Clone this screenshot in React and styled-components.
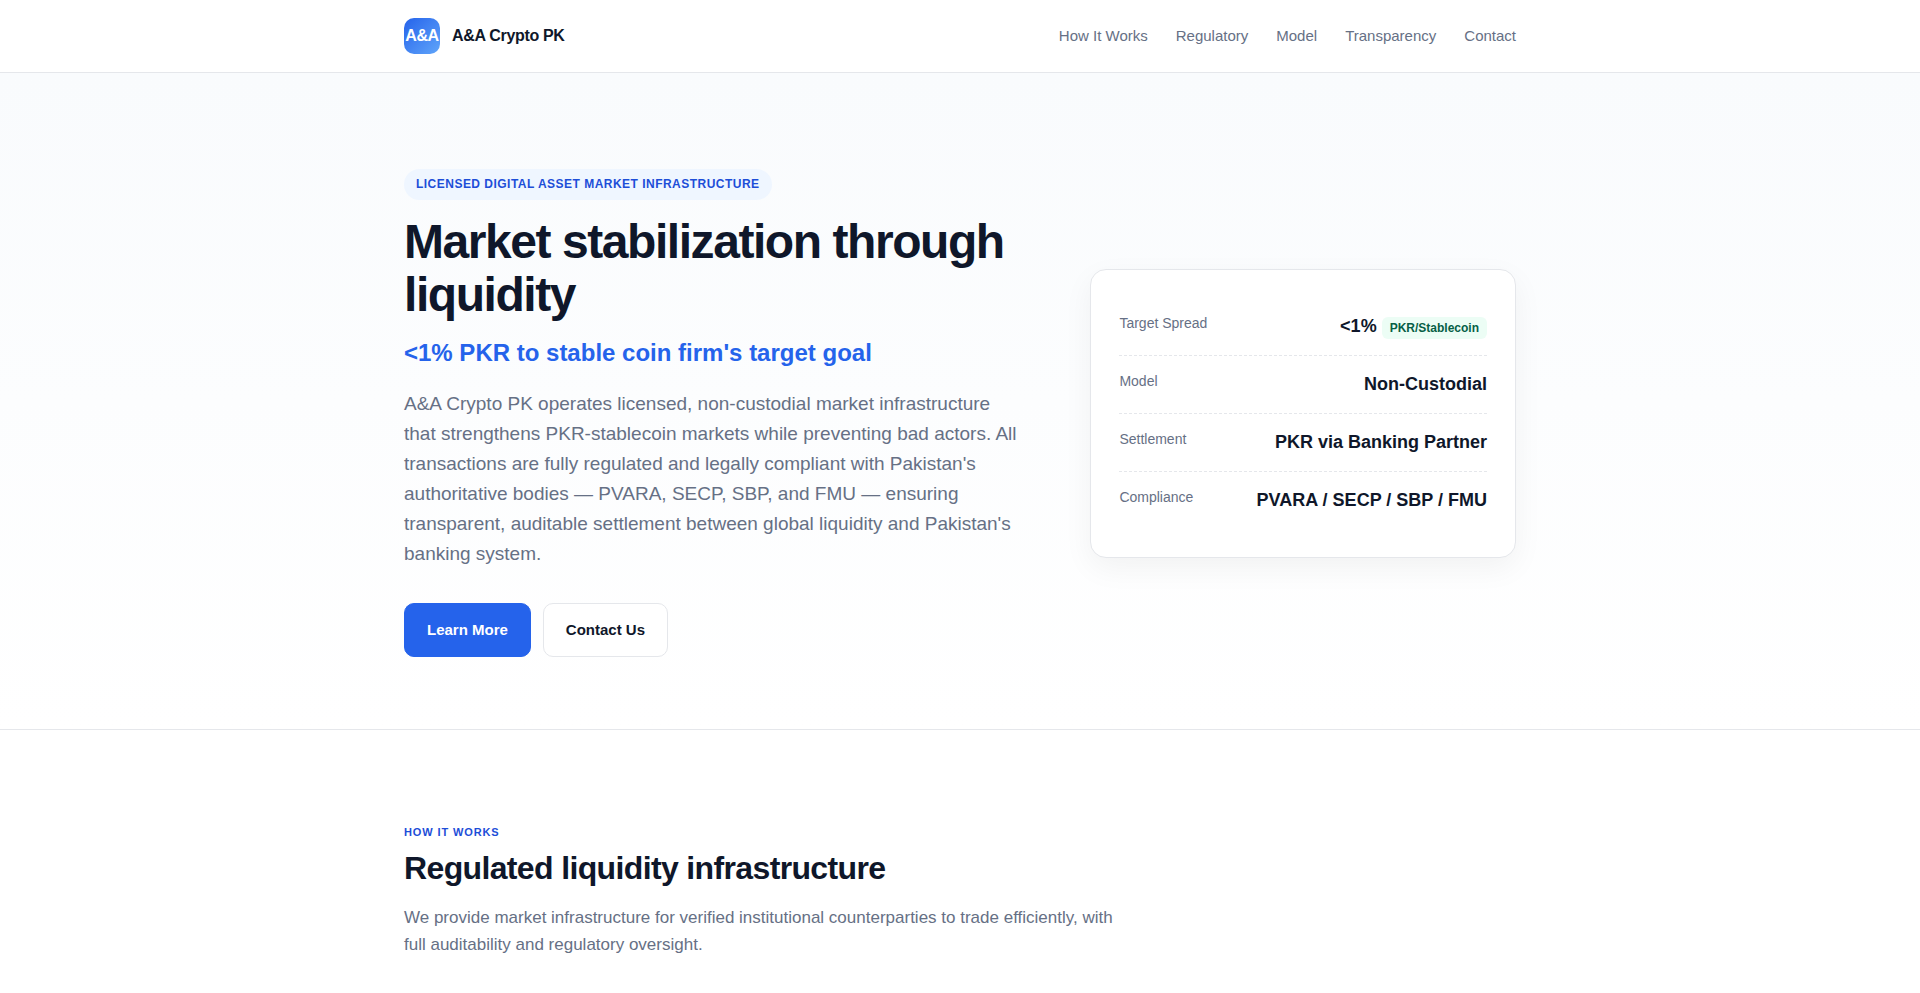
import styled, { createGlobalStyle } from "styled-components"

const links = [
  { href: "#how", label: "How It Works" },
  { href: "#regulatory", label: "Regulatory" },
  { href: "#model", label: "Model" },
  { href: "#transparency", label: "Transparency" },
  { href: "#contact", label: "Contact" },
]

const stats = [
  { label: "Target Spread", value: "<1%", tag: "PKR/Stablecoin" },
  { label: "Model", value: "Non-Custodial" },
  { label: "Settlement", value: "PKR via Banking Partner" },
  { label: "Compliance", value: "PVARA / SECP / SBP / FMU" },
]

export default function App() {
  return (
    <>
      <GlobalStyle />
      <Header>
        <HeaderInner>
          <Brand href="#top">
            <Logo>A&amp;A</Logo>
            <span>A&amp;A Crypto PK</span>
          </Brand>
          <Nav>
            {links.map((l) => (
              <NavLink key={l.href} href={l.href}>{l.label}</NavLink>
            ))}
          </Nav>
        </HeaderInner>
      </Header>

      <Hero id="top">
        <HeroGrid>
          <div>
            <Pill>Licensed Digital Asset Market Infrastructure</Pill>
            <Title>Market stabilization through liquidity</Title>
            <Tagline>&lt;1% PKR to stable coin firm's target goal</Tagline>
            <Lead>
              A&amp;A Crypto PK operates licensed, non-custodial market infrastructure that
              strengthens PKR-stablecoin markets while preventing bad actors. All transactions
              are fully regulated and legally compliant with Pakistan's authoritative
              bodies — PVARA, SECP, SBP, and FMU — ensuring transparent, auditable settlement
              between global liquidity and Pakistan's banking system.
            </Lead>
            <Actions>
              <Button $primary>Learn More</Button>
              <Button>Contact Us</Button>
            </Actions>
          </div>

          <Card>
            {stats.map((s) => (
              <StatRow key={s.label}>
                <StatLabel>{s.label}</StatLabel>
                <StatValue>
                  {s.value}
                  {s.tag && <Tag>{s.tag}</Tag>}
                </StatValue>
              </StatRow>
            ))}
          </Card>
        </HeroGrid>
      </Hero>

      <Section id="how">
        <Container>
          <Eyebrow>How It Works</Eyebrow>
          <SectionTitle>Regulated liquidity infrastructure</SectionTitle>
          <SectionText>
            We provide market infrastructure for verified institutional counterparties to trade
            efficiently, with full auditability and regulatory oversight.
          </SectionText>
        </Container>
      </Section>
    </>
  )
}

const GlobalStyle = createGlobalStyle`
  * {
    box-sizing: border-box;
    margin: 0;
  }
  html {
    scrollbar-width: none;
  }
  body {
    background: #ffffff;
    color: #0f172a;
    font-family: "Liberation Sans", Arial, sans-serif;
    font-size: 16px;
    line-height: 26px;
  }
`
const Container = styled.div`
  max-width: 1160px;
  margin: 0 auto;
  padding: 0 24px;
`
const Header = styled.header`
  background: #ffffff;
  border-bottom: 1px solid #e5e7eb;
`
const HeaderInner = styled(Container)`
  display: flex;
  align-items: center;
  justify-content: space-between;
  height: 72px;
`
const Brand = styled.a`
  display: flex;
  align-items: center;
  gap: 12px;
  color: #0f172a;
  font-weight: 700;
  letter-spacing: -0.02em;
  text-decoration: none;
`
const Logo = styled.span`
  display: grid;
  place-items: center;
  width: 36px;
  height: 36px;
  border-radius: 10px;
  background: linear-gradient(135deg, #2563eb, #60a5fa);
  color: #ffffff;
`
const Nav = styled.nav`
  display: flex;
  gap: 28px;
`
const NavLink = styled.a`
  color: #667085;
  font-size: 15px;
  text-decoration: none;
`
const Hero = styled.section`
  padding: 96px 0 72px;
  border-bottom: 1px solid #e5e7eb;
  background: linear-gradient(180deg, #f9fbfd 0%, #ffffff 100%);
`
const HeroGrid = styled(Container)`
  display: grid;
  grid-template-columns: 3fr 2fr;
  align-items: center;
  gap: 48px;
`
const Pill = styled.span`
  display: inline-block;
  padding: 6px 12px;
  border-radius: 999px;
  background: #eff6ff;
  color: #1d4ed8;
  font-size: 12px;
  font-weight: 700;
  line-height: 19px;
  letter-spacing: 0.04em;
  text-transform: uppercase;
`
const Title = styled.h1`
  margin-top: 15px;
  font-size: 48px;
  line-height: 53px;
  letter-spacing: -0.03em;
`
const Tagline = styled.p`
  margin-top: 13px;
  color: #2563eb;
  font-size: 24px;
  font-weight: 700;
  line-height: 38px;
`
const Lead = styled.p`
  max-width: 620px;
  margin-top: 17px;
  color: #667085;
  font-size: 19px;
  line-height: 30px;
`
const Actions = styled.div`
  display: flex;
  gap: 12px;
  margin-top: 34px;
`
const Button = styled.button`
  padding: 14px 22px;
  border: 1px solid ${(p) => (p.$primary ? "#2563eb" : "#e5e7eb")};
  border-radius: 10px;
  background: ${(p) => (p.$primary ? "#2563eb" : "#ffffff")};
  color: ${(p) => (p.$primary ? "#ffffff" : "#0f172a")};
  font-family: inherit;
  font-size: 15px;
  font-weight: 700;
  line-height: 24px;
  cursor: pointer;
`
const Card = styled.div`
  padding: 28px;
  border: 1px solid #e5e7eb;
  border-radius: 16px;
  background: #ffffff;
  box-shadow: 0 10px 30px rgba(0, 0, 0, 0.05);
`
const StatRow = styled.div`
  display: flex;
  justify-content: space-between;
  padding: 14px 0;
  border-bottom: 1px dashed #e5e7eb;

  &:last-child {
    border-bottom: none;
  }
`
const StatLabel = styled.span`
  color: #667085;
  font-size: 14px;
  line-height: 22px;
`
const StatValue = styled.span`
  font-size: 18px;
  font-weight: 700;
  line-height: 29px;
`
const Tag = styled.span`
  margin-left: 5px;
  padding: 4px 8px;
  border-radius: 6px;
  background: #ecfdf5;
  color: #065f46;
  font-size: 12px;
  line-height: 19px;
`
const Section = styled.section`
  padding: 88px 0;
`
const Eyebrow = styled.p`
  color: #1d4ed8;
  font-size: 11px;
  font-weight: 700;
  line-height: 28px;
  letter-spacing: 0.08em;
  text-transform: uppercase;
`
const SectionTitle = styled.h2`
  margin-top: 3px;
  font-size: 32px;
  line-height: 38px;
  letter-spacing: -0.02em;
`
const SectionText = styled.p`
  max-width: 720px;
  margin-top: 17px;
  color: #667085;
  font-size: 17px;
  line-height: 27px;
`
